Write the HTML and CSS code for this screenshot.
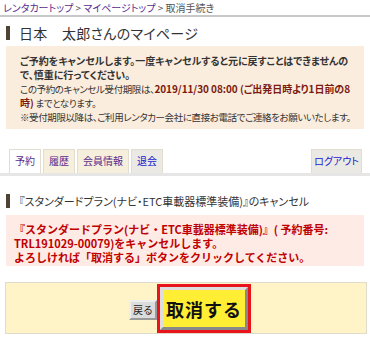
FILE: index.html
```html
<!DOCTYPE html>
<html lang="ja">
<head>
  <meta charset="UTF-8" />
  <meta name="viewport" content="width=device-width, initial-scale=1.0"/>
  <title>取消手続き</title>
  <link rel="stylesheet" href="styles.css">
</head>
<body>
  <div class="breadcrumb">
    <a href="#">レンタカートップ</a> &gt; <a href="#">マイページトップ</a> &gt; <span>取消手続き</span>
  </div>

  <h1 class="page-title">日本　太郎さんのマイページ</h1>

  <div class="notice">
    <p class="strong">ご予約をキャンセルします。一度キャンセルすると元に戻すことはできませんので、慎重に行ってください。</p>
    <p>この予約のキャンセル受付期限は、<b class="deadline">2019/11/30 08:00 (ご出発日時より1日前の8<wbr>時)</b> までとなります。</p>
    <p>※受付期限以降は、ご利用レンタカー会社に直接お電話でご連絡をお願いいたします。</p>
  </div>

  <div class="tabs">
    <a class="tab active" href="#">予約</a>
    <a class="tab" href="#">履歴</a>
    <a class="tab" href="#">会員情報</a>
    <a class="tab gray" href="#">退会</a>
    <a class="tab gray logout" href="#">ログアウト</a>
  </div>

  <h2 class="section-title">『スタンダードプラン(ナビ・ETC車載器標準装備)』のキャンセル</h2>

  <div class="alert">
    『スタンダードプラン(ナビ・ETC車載器標準装備)』( 予約番号: TRL191029-00079)をキャンセルします。<br>
    よろしければ「取消する」ボタンをクリックしてください。
  </div>

  <div class="actions">
    <button class="btn-back">戻る</button>
    <div class="btn-frame">
      <button class="btn-cancel">取消する</button>
    </div>
  </div>
</body>
</html>
```

FILE: styles.css
```css
body {
  margin: 0;
  background: #fff;
  color: #333;
  font-family: "Noto Sans CJK JP", "Noto Sans", sans-serif;
  font-feature-settings: "palt";
  width: 370px;
}

a {
  text-decoration: none;
}

.breadcrumb {
  height: 14px;
  padding: 1px 3px 0;
  font-size: 10px;
  line-height: 13px;
  color: #555;
  border-bottom: 2px solid #c8c8c8;
}

.breadcrumb a {
  color: #5b2c8e;
}

.page-title {
  margin: 9px 6px 6px;
  padding-left: 9px;
  border-left: 4px solid #4e4334;
  font-size: 14px;
  line-height: 14px;
  font-weight: normal;
  color: #333;
  letter-spacing: 0.3px;
}

.notice {
  margin: 0 6px;
  padding: 8px 4px 5px 14px;
  background: #fbeddd;
  font-size: 9.5px;
  line-height: 14px;
  letter-spacing: -0.4px;
  color: #333;
}

.notice p {
  margin: 0;
}

.notice .strong {
  font-size: 10px;
  letter-spacing: 0;
  font-weight: bold;
}

.deadline {
  font-size: 10px;
  letter-spacing: -0.05px;
  color: #7a1a10;
}

.tabs {
  display: flex;
  align-items: flex-end;
  gap: 2px;
  margin-top: 20px;
  padding: 0 8px 0 9px;
  border-bottom: 3px solid #e6e6e6;
}

.tab {
  padding: 3px 5px 4px;
  font-size: 10px;
  line-height: 16px;
  color: #5b2c8e;
  background: #f6efdb;
  border: 1px solid #e2ddd0;
  border-bottom: none;
}

.tab.active {
  background: #fff;
}

.tab.gray {
  background: #ebe9e3;
  color: #2020d0;
}

.tab.logout {
  margin-left: auto;
  padding: 3px 2px 4px;
}

.section-title {
  margin: 18px 6px 7px;
  padding-left: 9px;
  border-left: 4px solid #4e4334;
  font-size: 11px;
  line-height: 14px;
  font-weight: normal;
  color: #333;
}

.alert {
  margin: 0 6px;
  padding: 7px 8px 2px 8px;
  background: #ffebe5;
  color: #c00000;
  font-size: 11px;
  font-feature-settings: normal;
  line-height: 14px;
  font-weight: bold;
}

.actions {
  display: flex;
  justify-content: center;
  align-items: center;
  box-sizing: border-box;
  margin: 16px 3px 0 5px;
  padding-left: 8px;
  height: 52px;
  background: #fff3c8;
  border: 1px solid #e0dccd;
}

.btn-back {
  margin-top: 4px;
  padding: 1px 2px;
  font-family: inherit;
  font-size: 10px;
  line-height: 14px;
  background: #dcdcdc;
  border: 2px outset #eee;
  color: #222;
}

.btn-frame {
  align-self: stretch;
  display: flex;
  margin-top: 1px;
  border: 3px solid #e8141c;
}

.btn-cancel {
  padding: 0 3px;
  font-family: inherit;
  font-size: 18px;
  line-height: 1;
  font-weight: bold;
  letter-spacing: 1px;
  color: #111;
  background: #ffee33;
  border: 3px outset #ddd;
}
```
